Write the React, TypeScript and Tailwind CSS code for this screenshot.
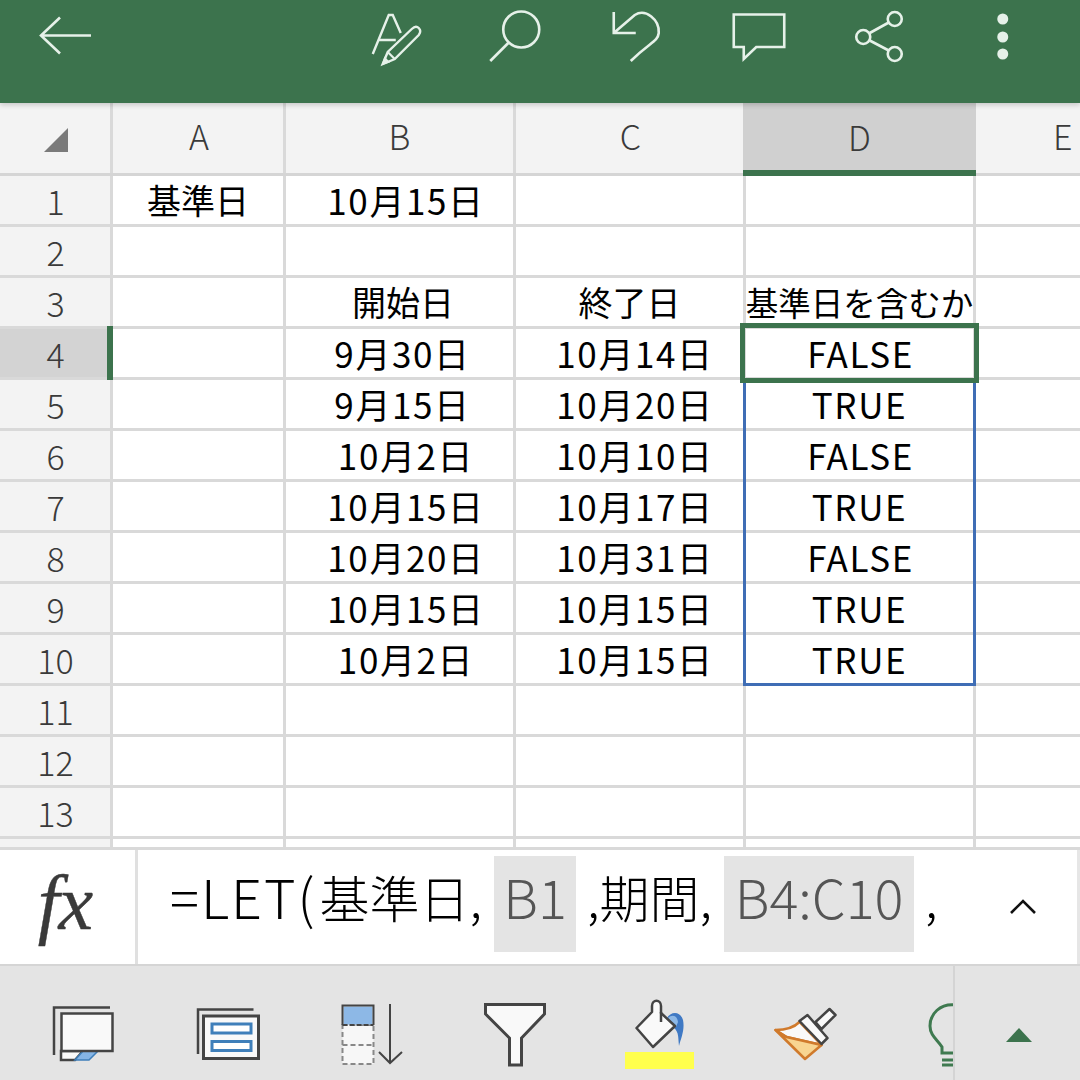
import React from "react";

const FONT = "font-['Noto_Sans_CJK_JP','Noto_Sans',sans-serif]";
const DATE = "text-[35px] tracking-[1.6px] pb-[2px]";
const HEAD = "text-[34px]";

type Row = { n: number; a?: string; b?: string; c?: string; d?: string; bp?: string; cp?: string; dp?: string };
const rows: Row[] = [
  { n: 1, a: "基準日", b: "10月15日", bp: `pl-[13px] ${DATE}` },
  { n: 2 },
  { n: 3, b: "開始日", c: "終了日", d: "基準日を含むか", bp: `pl-[7px] ${HEAD}`, cp: HEAD, dp: "text-[32.5px]" },
  { n: 4, b: "9月30日", c: "10月14日", d: "FALSE", bp: `pl-[6px] ${DATE}`, cp: `pl-[11px] ${DATE}`, dp: `pl-[2px] ${DATE}` },
  { n: 5, b: "9月15日", c: "10月20日", d: "TRUE", bp: `pl-[6px] ${DATE}`, cp: `pl-[11px] ${DATE}`, dp: DATE },
  { n: 6, b: "10月2日", c: "10月10日", d: "FALSE", bp: `pl-[13px] ${DATE}`, cp: `pl-[11px] ${DATE}`, dp: `pl-[2px] ${DATE}` },
  { n: 7, b: "10月15日", c: "10月17日", d: "TRUE", bp: `pl-[13px] ${DATE}`, cp: `pl-[11px] ${DATE}`, dp: DATE },
  { n: 8, b: "10月20日", c: "10月31日", d: "FALSE", bp: `pl-[13px] ${DATE}`, cp: `pl-[11px] ${DATE}`, dp: `pl-[2px] ${DATE}` },
  { n: 9, b: "10月15日", c: "10月15日", d: "TRUE", bp: `pl-[13px] ${DATE}`, cp: `pl-[11px] ${DATE}`, dp: DATE },
  { n: 10, b: "10月2日", c: "10月15日", d: "TRUE", bp: `pl-[13px] ${DATE}`, cp: `pl-[11px] ${DATE}`, dp: DATE },
  { n: 11 },
  { n: 12 },
  { n: 13 },
];

function Cell({ w, children, extra = "text-[34px]" }: { w: string; children?: React.ReactNode; extra?: string }) {
  return (
    <div className={`${w} shrink-0 h-full flex items-center justify-center border-r-[3px] border-[#d9d9d9] leading-none text-black whitespace-nowrap ${extra}`}>
      {children}
    </div>
  );
}

function TopIcon({ x, w = 121.5, children }: { x: number; w?: number; children: React.ReactNode }) {
  return (
    <svg width={w} height={103} viewBox={`${x} 0 ${w} 103`} className="shrink-0" fill="none" stroke="#e6f1e9" strokeWidth={2.6}>
      {children}
    </svg>
  );
}

function ToolIcon({ x, w = 144.5, children }: { x: number; w?: number; children: React.ReactNode }) {
  return (
    <svg width={w} height={114} viewBox={`${x} 966 ${w} 114`} className="shrink-0" fill="none">
      {children}
    </svg>
  );
}

export default function App() {
  return (
    <div className={`w-[1080px] h-[1080px] overflow-hidden flex flex-col bg-white ${FONT}`}>
      {/* Title bar */}
      <div className="h-[103px] shrink-0 bg-[#3c734d] flex relative z-10 shadow-[0_2px_5px_rgba(0,0,0,0.18)]">
        <TopIcon x={0} w={335.25}>
          <path d="M41 35.5H91M60 17.5L41 35.5L60 53.5" />
        </TopIcon>
        <TopIcon x={335.25}>
          <path d="M373 54L389 15H393L401 33M379 40H396" strokeWidth={2.4} />
          <path d="M383 64L388 52L412 29Q416 25 419 28Q422 31 419 35L395 59Z" strokeWidth={2.4} />
          <path d="M388 52L395 59" strokeWidth={2.2} />
          <path d="M383 64L385 58L389 62Z" fill="#e6f1e9" strokeWidth={1.5} />
        </TopIcon>
        <TopIcon x={456.75}>
          <circle cx={521} cy={29.5} r={18} />
          <path d="M490 61L508 43" />
        </TopIcon>
        <TopIcon x={578.25}>
          <path d="M614 12V33H636M614 33L635 15C646 8 660 20 659 33C658 42 650 42 631 61" />
        </TopIcon>
        <TopIcon x={699.75}>
          <path d="M733.5 14.5H784V47H756L743.5 59V47H733.5Z" />
        </TopIcon>
        <TopIcon x={821.25}>
          <circle cx={895} cy={19} r={7} />
          <circle cx={863.5} cy={37} r={7} />
          <circle cx={895} cy={54} r={7} />
          <path d="M870 33L889 22.5M870 40.5L889 50.5" />
        </TopIcon>
        <TopIcon x={942.75}>
          <g fill="#e6f1e9" stroke="none">
            <circle cx={1002.5} cy={19} r={5.5} />
            <circle cx={1002.5} cy={37} r={5.5} />
            <circle cx={1002.5} cy={54} r={5.5} />
          </g>
        </TopIcon>
      </div>

      {/* Sheet */}
      <div className="h-[747px] shrink-0 relative overflow-hidden border-b-[3px] border-[#d9d9d9]">
        {/* Column header */}
        <div className="h-[73px] flex bg-[#f3f3f3] border-b-[3px] border-[#d5d5d5] text-[#3a3a3a] text-[34px] font-light leading-none">
          <div className="w-[113px] shrink-0 border-r-[3px] border-[#d9d9d9] flex items-center justify-center">
            <svg width="26" height="26" viewBox="0 0 26 26" className="ml-[2px] mt-[4px]">
              <path d="M25 1V25H1Z" fill="#7a7a7a" />
            </svg>
          </div>
          <div className="w-[173px] shrink-0 flex items-center justify-center border-r-[3px] border-[#d9d9d9] pl-[2px] pb-[4px]">A</div>
          <div className="w-[230px] shrink-0 flex items-center justify-center border-r-[3px] border-[#d9d9d9] pb-[4px]">B</div>
          <div className="w-[227px] shrink-0 flex items-center justify-center pl-[2px] pb-[4px]">C</div>
          <div className="w-[233px] shrink-0 h-[73px] flex items-center justify-center bg-[#d0d0d0] border-b-[6px] border-[#3c734d]">D</div>
          <div className="flex-1 flex items-center justify-start pl-[77px] pb-[4px]">E</div>
        </div>

        {rows.map((r) => (
          <div key={r.n} className="h-[51px] flex border-b-[3px] border-[#d9d9d9]">
            <div className={`w-[113px] shrink-0 h-full flex items-center justify-center border-r-[3px] border-[#d9d9d9] text-[34px] font-light leading-none text-[#3a3a3a] pt-[1px] pl-[1px] ${r.n === 4 ? "bg-[#d3d3d3]" : "bg-[#f3f3f3]"}`}>
              {r.n}
            </div>
            <Cell w="w-[173px]">{r.a}</Cell>
            <Cell w="w-[230px]" extra={r.bp}>{r.b}</Cell>
            <Cell w="w-[230px]" extra={r.cp}>{r.c}</Cell>
            <Cell w="w-[230px]" extra={r.dp}>{r.d}</Cell>
            <div className="flex-1" />
          </div>
        ))}
        <div className="h-[8px] flex">
          <div className="w-[113px] shrink-0 h-full bg-[#f3f3f3] border-r-[3px] border-[#d9d9d9]" />
          <div className="w-[173px] shrink-0 h-full border-r-[3px] border-[#d9d9d9]" />
          <div className="w-[230px] shrink-0 h-full border-r-[3px] border-[#d9d9d9]" />
          <div className="w-[230px] shrink-0 h-full border-r-[3px] border-[#d9d9d9]" />
          <div className="w-[230px] shrink-0 h-full border-r-[3px] border-[#d9d9d9]" />
        </div>

        {/* Selection overlays */}
        <div className="absolute left-[743px] top-[277px] w-[233px] h-[306px] border-[3px] border-[#3f6db5] pointer-events-none" />
        <div className="absolute left-[740px] top-[220px] w-[239px] h-[60px] border-[5px] border-[#3c734d] pointer-events-none" />
        <div className="absolute left-[107px] top-[223px] w-[6px] h-[54px] bg-[#3c734d]" />
      </div>

      {/* Formula bar */}
      <div className="h-[116px] shrink-0 flex border-b-[2px] border-[#d5d5d5] bg-white">
        <div className="w-[138px] shrink-0 border-r-[3px] border-[#e0e0e0] flex items-center justify-center">
          <span className="font-['Liberation_Serif',serif] italic text-[78px] leading-none text-[#3a3a3a] [-webkit-text-stroke:0.4px_#3a3a3a] -mt-[8px] -ml-[4px]">
            f<span className="-ml-[1px]">x</span>
          </span>
        </div>
        <div className="flex-1 flex items-start pt-[6px] pl-[32px] border-r-[3px] border-[#e6e6e6] text-[50px] font-light leading-none text-black whitespace-nowrap">
          <div className="h-[96px] flex items-center pb-[16px]">
            <span className="text-[54px] tracking-[2px]">=LET(</span>
            <span className="ml-[3px]">基準日,</span>
          </div>
          <div className="ml-[12px] w-[82px] h-[96px] bg-[#e4e4e4] text-[#555] text-[54px] flex items-center justify-center pb-[16px]">B1</div>
          <div className="ml-[11px] h-[96px] flex items-center pb-[16px]">,期間,</div>
          <div className="ml-[12px] w-[190px] h-[96px] bg-[#e4e4e4] text-[#555] text-[54px] flex items-center justify-center pb-[16px]">B4:C10</div>
          <div className="ml-[11px] h-[96px] flex items-center pb-[16px]">,</div>
          <svg width="28" height="18" viewBox="0 0 28 18" className="ml-[71px] mt-[42px]" fill="none" stroke="#111" strokeWidth="2.6">
            <path d="M2 15L14 3L26 15" />
          </svg>
        </div>
      </div>

      {/* Toolbar */}
      <div className="flex-1 flex bg-[#e4e4e4]">
        <div className="w-[953px] shrink-0 flex overflow-hidden pl-[11px]">
          <ToolIcon x={11}>
            <path d="M110 1007.5H54V1055" stroke="#444" strokeWidth="2.5" />
            <path d="M61 1051V1060H75L83 1051Z" fill="#f9f9f9" stroke="#444" strokeWidth="2.5" />
            <path d="M83 1051H98L89 1060H75Z" fill="#85b5e6" stroke="#3f7fba" strokeWidth="1.5" />
            <rect x="61.5" y="1013.5" width="51" height="37.5" fill="#f9f9f9" stroke="#444" strokeWidth="2.5" />
          </ToolIcon>
          <ToolIcon x={155.5}>
            <path d="M253 1009.5H197.5V1054" stroke="#444" strokeWidth="2.5" />
            <rect x="203" y="1016" width="55" height="42.5" fill="#f9f9f9" stroke="#444" strokeWidth="3" />
            <rect x="211.5" y="1024" width="39" height="9" fill="#fff" stroke="#3f7fba" strokeWidth="3" />
            <rect x="211.5" y="1041.5" width="39" height="9" fill="#fff" stroke="#3f7fba" strokeWidth="3" />
          </ToolIcon>
          <ToolIcon x={300}>
            <rect x="342.5" y="1025" width="31" height="39" fill="#f7f7f7" stroke="#888" strokeWidth="2" strokeDasharray="5 3" />
            <path d="M342.5 1045H373.5" stroke="#888" strokeWidth="2" strokeDasharray="5 3" />
            <rect x="343.5" y="1006.5" width="29" height="18" fill="#8db8e6" />
            <path d="M342.5 1025V1005.5H373.5V1025" stroke="#444" strokeWidth="2" />
            <path d="M342.5 1025H373.5" stroke="#444" strokeWidth="2" strokeDasharray="5 2" />
            <path d="M390 1004V1063M379 1052L390 1063L402 1052" stroke="#444" strokeWidth="2" />
          </ToolIcon>
          <ToolIcon x={444.5}>
            <path d="M485 1004.5H544V1014L521 1038V1065H509V1038L485 1014Z" fill="#f9f9f9" stroke="#444" strokeWidth="3" />
          </ToolIcon>
          <ToolIcon x={589}>
            <path d="M667 1018C670 1012 680 1010 683 1020C685 1030 681 1038 679 1046C678 1038 679 1032 674 1028Z" fill="#3f79c4" />
            <path d="M668 1018C672 1014 677 1015 678 1022L676 1027L674 1026Z" fill="#8db8e6" />
            <path d="M652 1012L636.5 1028L653 1047L675 1026L661 1013V1006C661 999 652 999 652 1006Z" fill="#f9f9f9" stroke="#444" strokeWidth="2.5" strokeLinejoin="round" />
            <path d="M661 1012V1022" stroke="#444" strokeWidth="2.5" />
            <rect x="625" y="1052" width="69" height="17" fill="#ffff4d" />
          </ToolIcon>
          <ToolIcon x={733.5}>
            <path d="M775 1030C785 1030 794 1027 799 1022L821 1045L786 1037Z" fill="#f9f9f9" stroke="#d07a2c" strokeWidth="2.5" strokeLinejoin="round" />
            <path d="M786 1037L821 1045L804.5 1059L775 1030Z" fill="#f8d591" stroke="#d07a2c" strokeWidth="2.5" strokeLinejoin="round" />
            <path d="M815 1022L829 1009L835 1015L821 1029Z" fill="#f9f9f9" stroke="#444" strokeWidth="2.5" strokeLinejoin="round" />
            <path d="M799 1021L807 1015L827 1038L821 1044Z" fill="#f9f9f9" stroke="#444" strokeWidth="2.5" strokeLinejoin="round" />
          </ToolIcon>
          <ToolIcon x={878}>
            <path d="M956 1005C940 1003 930 1014 930 1026C930 1036 938 1040 942 1047V1053H956M942 1060H956M942 1065H956" stroke="#3f7a50" strokeWidth="3" />
          </ToolIcon>
        </div>
        <div className="flex-1 border-l-[2px] border-[#d4d4d4] flex items-center justify-center">
          <svg width="26" height="14" viewBox="0 0 26 14" className="ml-[2px] mt-[23px]">
            <path d="M13 0L26 14H0Z" fill="#3c734d" />
          </svg>
        </div>
      </div>
    </div>
  );
}
